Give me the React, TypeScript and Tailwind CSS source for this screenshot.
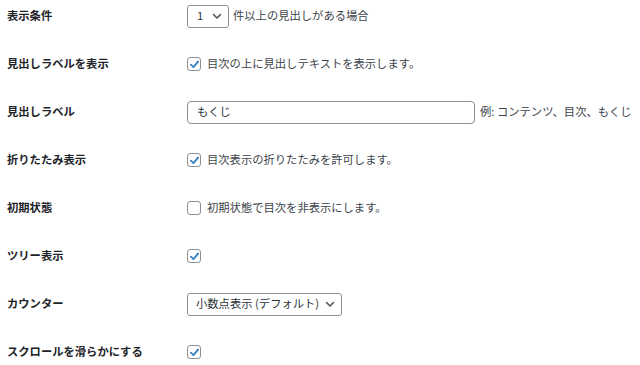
import type { ReactNode } from 'react';

const FONT = '[font-family:"Noto_Sans_CJK_JP","Noto_Sans",sans-serif]';

function Chevron() {
  return (
    <svg width="10" height="10" viewBox="0 0 10 10" className="shrink-0">
      <path d="M1.5 3.5 L5 7 L8.5 3.5" fill="none" stroke="#50575e" strokeWidth="1.6" strokeLinecap="round" strokeLinejoin="round" />
    </svg>
  );
}

function Checkbox({ checked }: { checked: boolean }) {
  return (
    <span className="w-[14px] h-[14px] shrink-0 rounded-[3px] border border-[#8c8f94] bg-white flex items-center justify-center">
      {checked && (
        <svg width="11" height="11" viewBox="0 0 12 12">
          <path d="M2.2 6.2 L4.9 8.9 L9.9 2.8" fill="none" stroke="#3582c4" strokeWidth="2" strokeLinecap="round" strokeLinejoin="round" />
        </svg>
      )}
    </span>
  );
}

function Row({ label, children }: { label: string; children: ReactNode }) {
  return (
    <div className="h-12 flex items-center">
      <div className="w-[187px] shrink-0 pl-[7px] font-semibold text-[#1d2327]">{label}</div>
      <div className="flex items-center text-[#3c434a]">{children}</div>
    </div>
  );
}

export default function App() {
  return (
    <div className={`w-[640px] h-[365px] overflow-hidden bg-white text-[11.3px] leading-none ${FONT}`}>
      <div className="-mt-2">
        <Row label="表示条件">
          <div className="w-[42px] h-[23px] rounded-[3px] border border-[#8c8f94] flex items-center justify-between pl-[9px] pr-[6px] text-[#2c3338]">
            <span>1</span>
            <Chevron />
          </div>
          <span className="ml-[4px]">件以上の見出しがある場合</span>
        </Row>
        <Row label="見出しラベルを表示">
          <Checkbox checked />
          <span className="ml-[6px]">目次の上に見出しテキストを表示します。</span>
        </Row>
        <Row label="見出しラベル">
          <div className="w-[288px] h-[23px] rounded-[4px] border border-[#8c8f94] flex items-center pl-[9px] text-[#2c3338]">
            もくじ
          </div>
          <span className="ml-[5px]">例: コンテンツ、目次、もくじ</span>
        </Row>
        <Row label="折りたたみ表示">
          <Checkbox checked />
          <span className="ml-[6px]">目次表示の折りたたみを許可します。</span>
        </Row>
        <Row label="初期状態">
          <Checkbox checked={false} />
          <span className="ml-[6px]">初期状態で目次を非表示にします。</span>
        </Row>
        <Row label="ツリー表示">
          <Checkbox checked />
        </Row>
        <Row label="カウンター">
          <div className="w-[155px] h-[23px] rounded-[3px] border border-[#8c8f94] flex items-center justify-between pl-[8px] pr-[6px] text-[#2c3338]">
            <span>小数点表示 (デフォルト)</span>
            <Chevron />
          </div>
        </Row>
        <Row label="スクロールを滑らかにする">
          <Checkbox checked />
        </Row>
      </div>
    </div>
  );
}
